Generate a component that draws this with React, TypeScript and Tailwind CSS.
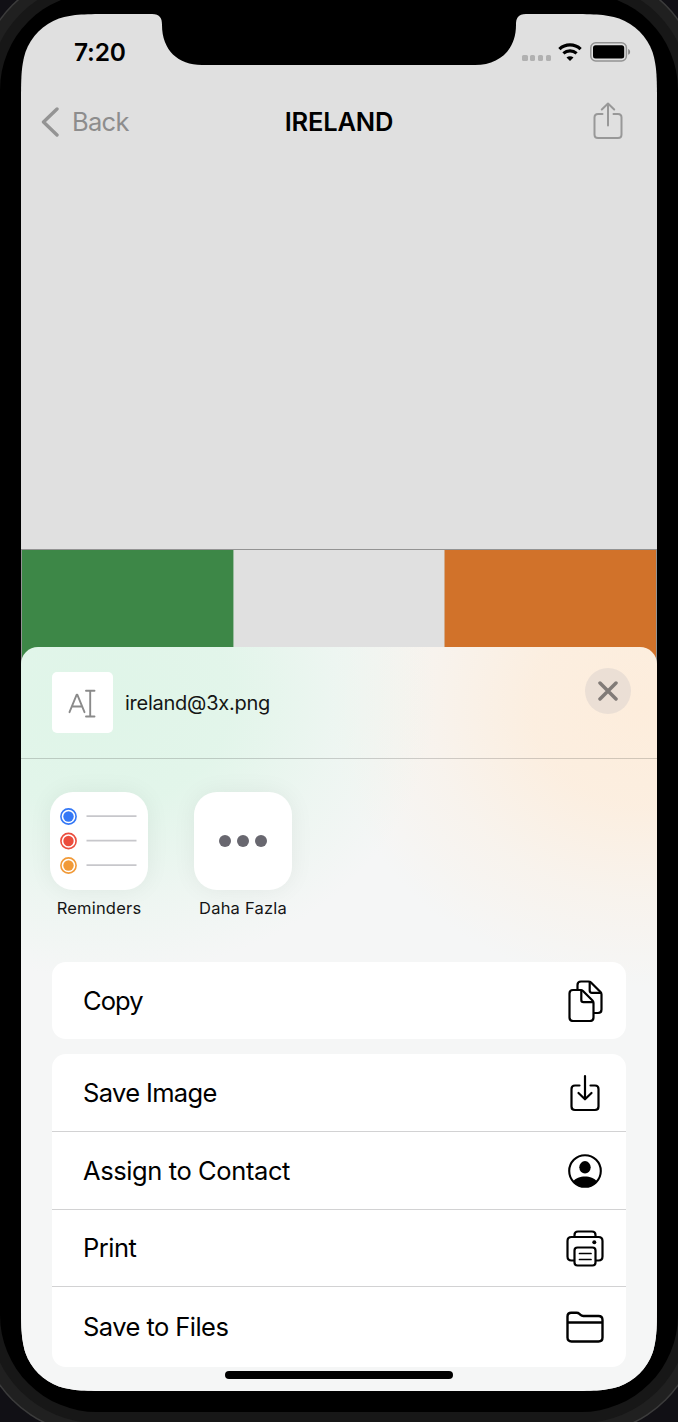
import type { ReactNode } from "react";

function Icon({ children, className, width, height, strokeWidth = 2.2 }: { children: ReactNode; className?: string; width: number; height: number; strokeWidth?: number }) {
  return (
    <svg
      width={width}
      height={height}
      viewBox={`0 0 ${width} ${height}`}
      fill="none"
      stroke="currentColor"
      strokeWidth={strokeWidth}
      strokeLinecap="round"
      strokeLinejoin="round"
      className={className}
    >
      {children}
    </svg>
  );
}

function Notch() {
  return (
    <svg width="374" height="52" viewBox="0 0 374 52" className="absolute top-0 left-[131px]">
      <path d="M0 0C8 0 10 4 10 11C10 36 26 51 50 51H323C347 51 364 36 364 11C364 4 366 0 374 0Z" fill="#000" />
    </svg>
  );
}

function StatusBar() {
  return (
    <div className="flex h-[76px] shrink-0 items-center justify-between pr-[26px] pl-[53px]">
      <span className="text-[24.5px] font-semibold tracking-[-0.2px] text-black">7:20</span>
      <div className="flex items-center">
        <div className="mt-[12px] mr-[7px] flex gap-[2.5px]">
          {[0, 1, 2, 3].map((i) => (
            <span key={i} className="h-[5.5px] w-[5.3px] rounded-[1.5px] bg-[#b1b1b1]" />
          ))}
        </div>
        <svg width="24" height="18" viewBox="0 0 24 18" fill="none" stroke="#000" className="mr-[8px]">
          <path d="M1.4 6.1C7.4 .5 16.6 .5 22.6 6.1" strokeWidth="3.3" />
          <path d="M5.4 10.4C9.2 7 14.8 7 18.6 10.4" strokeWidth="3.2" />
          <path d="M12 18L8.5 14.4C10.5 12.7 13.5 12.7 15.5 14.4Z" fill="#000" stroke="none" />
        </svg>
        <svg width="41" height="20" viewBox="0 0 41 20">
          <rect x=".8" y=".8" width="35.6" height="18.2" rx="5" fill="none" stroke="#929292" strokeWidth="1.5" />
          <rect x="3" y="3.2" width="31.2" height="13.4" rx="2.5" fill="#000" />
          <path d="M38.2 7C40.8 7.8 40.8 12 38.2 12.8Z" fill="#858585" />
        </svg>
      </div>
    </div>
  );
}

function NavBar() {
  return (
    <div className="grid h-[64px] shrink-0 grid-cols-3 items-center">
      <div className="flex items-center gap-[13px] pl-[20px] text-[#8d8d8d]">
        <Icon width={18} height={30} strokeWidth={3.4} className="text-[#949494]">
          <path d="M16 2L2.5 15L16 28" />
        </Icon>
        <span className="text-[25.5px] tracking-[-0.7px]">Back</span>
      </div>
      <span className="text-center text-[25.5px] font-semibold tracking-[-0.2px] text-black">IRELAND</span>
      <div className="flex justify-end pr-[34px]">
        <Icon width={30} height={38} strokeWidth={2} className="-mt-[3px] text-[#989898]">
          <path d="M9.5 12H5Q1.5 12 1.5 15.5V32.5Q1.5 36 5 36H25Q28.5 36 28.5 32.5V15.5Q28.5 12 25 12H20.5" />
          <path d="M15 23.5V1.5M8.8 7.5L15 1.5L21.2 7.5" />
        </Icon>
      </div>
    </div>
  );
}

function Flag() {
  return (
    <div className="mt-[395px] flex h-[120px] shrink-0 border-x border-t border-[#939393]">
      <div className="w-[212px] border-r border-[#9bbc9f] bg-[#3d8747]" />
      <div className="flex-1 bg-[#e0e0e0]" />
      <div className="w-[212px] border-l border-[#d2aa88] bg-[#d1722a]" />
    </div>
  );
}

function SheetHeader() {
  return (
    <div className="flex h-[112px] shrink-0 items-start border-b border-black/17 pt-[25px] pr-[26px] pl-[31px]">
      <div className="flex size-[61px] items-center justify-center rounded-[5px] bg-white text-[#8a8a8a]">
        <Icon width={28} height={30} strokeWidth={1.9} className="-ml-[2px] mt-[2px]">
          <path d="M1.5 23.2L8.7 5.7H9.3L16.5 23.2M4 17.5H14" />
          <path d="M18 1.7H26.5M22.2 1.7V27.5M18 27.5H26.5" />
        </Icon>
      </div>
      <span className="mt-[17px] ml-[12px] text-[20px] leading-[28px] tracking-[-0.25px] text-[#151515]">ireland@3x.png</span>
      <button className="-mt-[4px] ml-auto flex size-[46px] items-center justify-center rounded-full bg-[#ebdfd5] text-[#817b77]">
        <Icon width={20} height={20} strokeWidth={3.5}>
          <path d="M2 2L18 18M18 2L2 18" />
        </Icon>
      </button>
    </div>
  );
}

function Tile({ label, children }: { label: string; children: ReactNode }) {
  return (
    <div className="flex w-[98px] flex-col items-center">
      <div className="flex size-[98px] items-center justify-center rounded-[23px] bg-white shadow-[0_0_24px_rgba(0,0,0,0.06)]">{children}</div>
      <span className="mt-[7px] text-[16.5px] leading-[22px] tracking-[0.2px] whitespace-nowrap text-[#151515]">{label}</span>
    </div>
  );
}

function Reminders() {
  const items = [
    { y: 24.5, color: "#3478f6" },
    { y: 49, color: "#eb4d3d" },
    { y: 73.5, color: "#f19a38" },
  ];
  return (
    <svg width="98" height="98" viewBox="0 0 98 98">
      {items.map(({ y, color }) => (
        <g key={color}>
          <circle cx="18.5" cy={y} r="7.6" fill="none" stroke={color} strokeWidth="1.6" />
          <circle cx="18.5" cy={y} r="5.2" fill={color} />
          <path d={`M36.5 ${y - 0.3}H86.5`} stroke="#c7c7cb" strokeWidth="1.8" />
        </g>
      ))}
    </svg>
  );
}

function Row({ label, icon, className }: { label: string; icon: ReactNode; className: string }) {
  return (
    <div className={`flex shrink-0 items-center justify-between pl-[31px] text-black ${className}`}>
      <span className="text-[25.5px] leading-[32px]">{label}</span>
      <span className="flex w-[82px] justify-center">{icon}</span>
    </div>
  );
}

const copyIcon = (
  <Icon width={36} height={42} className="ml-px">
    <path d="M9.5 9V5Q9.5 1.5 13 1.5H20.5Q22 1.5 23 2.5L32.5 12Q33.5 13 33.5 14.5V29.5Q33.5 33 30 33H26.5" />
    <path d="M21.7 2V10.5Q21.7 12.8 24 12.8H33" />
    <path d="M5 10H12.5Q14 10 15 11L24.5 20.5Q25.5 21.5 25.5 23V37.5Q25.5 41 22 41H5Q1.5 41 1.5 37.5V13.5Q1.5 10 5 10Z" />
    <path d="M13.3 10.5V20Q13.3 22.2 15.5 22.2H25" />
  </Icon>
);

const saveIcon = (
  <Icon width={30} height={38} className="mt-px">
    <path d="M9.5 11.5H5Q1.5 11.5 1.5 15V32.5Q1.5 36 5 36H25Q28.5 36 28.5 32.5V15Q28.5 11.5 25 11.5H20.5" />
    <path d="M15 2V25.3M8.5 19L15 25.3L21.5 19" />
  </Icon>
);

const contactIcon = (
  <Icon width={34} height={34} strokeWidth={2.1}>
    <circle cx="17" cy="17" r="15.8" />
    <ellipse cx="17" cy="13.3" rx="5.7" ry="6.2" fill="currentColor" stroke="none" />
    <path d="M5.2 27.4C9.5 20.8 24.5 20.8 28.8 27.4A15.8 15.8 0 0 1 5.2 27.4Z" fill="currentColor" stroke="none" />
  </Icon>
);

const printIcon = (
  <Icon width={38} height={37} className="mt-px">
    <path d="M8.5 6.5V5Q8.5 1.5 12 1.5H26Q29.5 1.5 29.5 5V6.5" />
    <path d="M8 30.5H5.5Q1.5 30.5 1.5 26.5V11Q1.5 7 5.5 7H32.5Q36.5 7 36.5 11V26.5Q36.5 30.5 32.5 30.5H30" />
    <rect x="8.5" y="17.5" width="21" height="18" rx="3" />
    <path d="M13.5 23.5H25M13.5 29.5H25" strokeWidth="1.7" />
    <circle cx="28.3" cy="12.3" r="2" fill="currentColor" stroke="none" />
  </Icon>
);

const folderIcon = (
  <Icon width={38} height={32} strokeWidth={2.4}>
    <path d="M5.5 30.5Q1.5 30.5 1.5 26.5V5.5Q1.5 1.8 5.2 1.8H10.5Q12.2 1.8 13.4 2.9L14.5 3.9Q15.7 5 17.3 5H32.5Q36.5 5 36.5 9V26.5Q36.5 30.5 32.5 30.5Z" />
    <path d="M1.5 11.5H36.5" strokeLinecap="butt" />
  </Icon>
);

function ShareSheet() {
  return (
    <div className="relative -mt-[22px] flex h-[744px] shrink-0 flex-col rounded-t-[17px] bg-[#f5f6f6] bg-[radial-gradient(ellipse_340px_280px_at_75px_50px,rgba(223,245,232,1)_0%,rgba(223,245,232,0.85)_40%,rgba(223,245,232,0.35)_72%,rgba(223,245,232,0)_100%),radial-gradient(ellipse_310px_280px_at_620px_60px,rgba(253,237,220,1)_0%,rgba(253,237,220,0.85)_35%,rgba(253,237,220,0.35)_68%,rgba(253,237,220,0)_100%)]">
      <SheetHeader />
      <div className="mt-[33px] flex gap-[46px] pl-[29px]">
        <Tile label="Reminders">
          <Reminders />
        </Tile>
        <Tile label="Daha Fazla">
          <div className="flex gap-[6px]">
            <span className="size-[12px] rounded-full bg-[#68676f]" />
            <span className="size-[12px] rounded-full bg-[#68676f]" />
            <span className="size-[12px] rounded-full bg-[#68676f]" />
          </div>
        </Tile>
      </div>
      <div className="mt-[43px] mr-[31px] ml-[31px] flex flex-col gap-[15px]">
        <div className="rounded-[14px] bg-white">
          <Row label="Copy" icon={copyIcon} className="h-[77px] tracking-[-0.9px]" />
        </div>
        <div className="divide-y divide-[#d2d2d3] rounded-[14px] bg-white">
          <Row label="Save Image" icon={saveIcon} className="h-[78px] tracking-[-0.65px]" />
          <Row label="Assign to Contact" icon={contactIcon} className="h-[78px] tracking-[-0.4px]" />
          <Row label="Print" icon={printIcon} className="h-[77px] tracking-[-0.5px]" />
          <Row label="Save to Files" icon={folderIcon} className="h-[80px] tracking-[-0.55px]" />
        </div>
      </div>
      <div className="absolute bottom-[12px] left-[204px] h-[8px] w-[228px] rounded-full bg-black" />
    </div>
  );
}

export default function App() {
  return (
    <div className="h-[1422px] w-[678px] overflow-hidden bg-[#111015] font-['Inter','Liberation_Sans',sans-serif]">
      <div className="-mt-[7px] h-[1419px] w-[678px] rounded-[97px] bg-black px-[21px] pt-[21px] shadow-[0_0_0_11px_#171717,0_0_0_22px_#202020,0_0_0_23.5px_#3c3c3c]">
        <div className="relative flex h-[1377px] w-[636px] flex-col overflow-hidden bg-[#e0e0e0] [clip-path:path('M91.7_0H544.3C570.7_0_583.9_0_598.1_4.5C613.6_10.1_625.9_22.4_631.5_37.9C636_52.1_636_65.3_636_91.7V1285.3C636_1311.7_636_1324.9_631.5_1339.1C625.9_1354.6_613.6_1366.9_598.1_1372.5C583.9_1377_570.7_1377_544.3_1377H91.7C65.3_1377_52.1_1377_37.9_1372.5C22.4_1366.9_10.1_1354.6_4.5_1339.1C0_1324.9_0_1311.7_0_1285.3V91.7C0_65.3_0_52.1_4.5_37.9C10.1_22.4_22.4_10.1_37.9_4.5C52.1_0_65.3_0_91.7_0Z')]">
          <StatusBar />
          <NavBar />
          <Flag />
          <ShareSheet />
          <Notch />
        </div>
      </div>
    </div>
  );
}
